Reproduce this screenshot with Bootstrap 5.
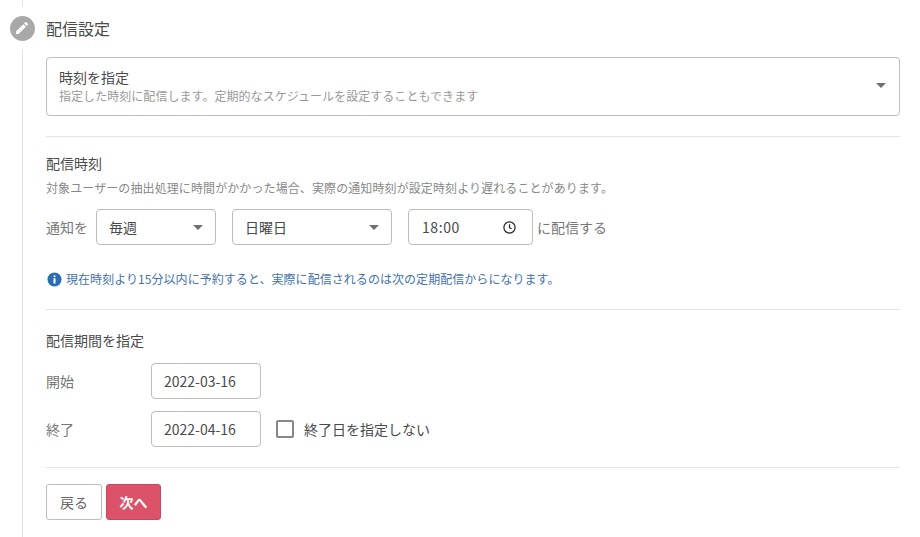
<!DOCTYPE html>
<html lang="ja">
<head>
<meta charset="utf-8">
<title>配信設定</title>
<link href="https://cdn.jsdelivr.net/npm/bootstrap@5.3.0/dist/css/bootstrap.min.css" rel="stylesheet">
<style>
body{font-family:"Noto Sans CJK JP","Noto Sans",sans-serif;font-size:14px;color:#4a4a4a;background:#fff;overflow:hidden}
.rail{margin-left:22px;border-left:1px solid #e2e2e2;padding:8px 20px 0 23px;position:relative;height:537px}
.step-dot{position:absolute;left:-14px;top:8px;width:26px;height:26px;box-sizing:content-box;border-top:8px solid #fff;border-bottom:8px solid #fff;margin-top:-1px;background:#fff;display:flex;align-items:center;justify-content:center}
.step-dot span{width:25px;height:25px;border-radius:50%;background:#a9a9a9;display:flex;align-items:center;justify-content:center}
.step-title{font-size:16px;line-height:24px;margin:8px 0 17px;font-weight:400;color:#4a4a4a}
.mode-box{height:59px;border:1px solid #bdbdbd;border-radius:4px;padding:7px 13px 9px 12px;line-height:20px;margin-bottom:20px}
.mode-sub{font-size:12px;color:#999;line-height:18px;letter-spacing:.05px}
.caret-a{width:0;height:0;border-left:5px solid transparent;border-right:5px solid transparent;border-top:5px solid #707070}
.rule-a{border-top:1px solid #e4e4e4;opacity:1;margin:0}
.sec-title{font-size:14px;line-height:20px;color:#4a4a4a}
.sec-one{margin-top:16px}
.sec-two{margin-top:20px}
.hint{font-size:12px;line-height:18px;color:#888;letter-spacing:.1px;margin-top:6px}
.ctl{height:36px;border:1px solid #bdbdbd;border-radius:4px;padding:0 12px;line-height:34px;font-size:14px;color:#4a4a4a;background:#fff}
.ctl-a{width:120px}
.ctl-b{width:160px}
.ctl-c{width:125px;padding-right:16px}
.ctl-c span{letter-spacing:.6px;margin-left:1px}
.ctl-d{width:110px}
.row-one{margin-top:12px}
.row-a{margin-top:13px}
.row-b{margin-top:12px}
.lbl{color:#777;font-size:14px;white-space:nowrap}
.lbl-w{width:105px}
.notice{font-size:12px;line-height:18px;color:#3f72ad;letter-spacing:.05px;margin-top:25px;padding-left:1px}
.rule-b{margin-top:21px}
.chk{width:18px;height:18px;border:2px solid #888;border-radius:2px;margin-left:15px;margin-right:10px}
.rule-c{margin-top:20px}
.btn-back,.btn-next{height:36px;font-size:14px;padding:0 12px;border-radius:3px;line-height:34px}
.btn-back{border:1px solid #bdbdbd;background:#fff;color:#666;width:56px}
.btn-next{border:1px solid #cf4660;background:#dc5268;color:#fff;font-weight:700;width:55px}
</style>
</head>
<body>
<div class="rail">
  <div class="step-dot"><span>
    <svg width="16" height="16" viewBox="0 0 24 24" fill="#fff"><path d="M3 17.25V21h3.75L17.81 9.94l-3.75-3.75L3 17.25zM20.71 7.04a1 1 0 0 0 0-1.41l-2.34-2.34a1 1 0 0 0-1.41 0l-1.83 1.83 3.75 3.75 1.83-1.83z"/></svg>
  </span></div>
  <h1 class="step-title">配信設定</h1>
  <div class="mode-box d-flex align-items-center justify-content-between">
    <div><div>時刻を指定</div><div class="mode-sub">指定した時刻に配信します。定期的なスケジュールを設定することもできます</div></div>
    <i class="caret-a"></i>
  </div>
  <hr class="rule-a">
  <div class="sec-title sec-one">配信時刻</div>
  <div class="hint">対象ユーザーの抽出処理に時間がかかった場合、実際の通知時刻が設定時刻より遅れることがあります。</div>
  <div class="d-flex align-items-center row-one">
    <span class="lbl me-2">通知を</span>
    <div class="ctl ctl-a d-flex align-items-center justify-content-between me-3"><span>毎週</span><i class="caret-a"></i></div>
    <div class="ctl ctl-b d-flex align-items-center justify-content-between me-3"><span>日曜日</span><i class="caret-a"></i></div>
    <div class="ctl ctl-c d-flex align-items-center justify-content-between"><span>18:00</span>
      <svg width="13" height="13" viewBox="0 0 13 13" fill="none" stroke="#222" stroke-width="1.2"><circle cx="6.5" cy="6.5" r="5.6"/><path d="M6.5 3.2v3.5l2.2 1.1"/></svg>
    </div>
    <span class="lbl ms-1">に配信する</span>
  </div>
  <div class="notice d-flex align-items-center gap-1">
    <svg width="15" height="15" viewBox="0 0 16 16"><circle cx="8" cy="8" r="7.5" fill="#2c6cb0"/><circle cx="8" cy="4.5" r="1.1" fill="#fff"/><rect x="6.9" y="6.7" width="2.2" height="5.6" fill="#fff"/></svg>
    <span>現在時刻より15分以内に予約すると、実際に配信されるのは次の定期配信からになります。</span>
  </div>
  <hr class="rule-a rule-b">
  <div class="sec-title sec-two">配信期間を指定</div>
  <div class="d-flex align-items-center row-a">
    <span class="lbl lbl-w">開始</span>
    <div class="ctl ctl-d">2022-03-16</div>
  </div>
  <div class="d-flex align-items-center row-b">
    <span class="lbl lbl-w">終了</span>
    <div class="ctl ctl-d">2022-04-16</div>
    <span class="chk"></span>
    <span>終了日を指定しない</span>
  </div>
  <hr class="rule-a rule-c">
  <div class="d-flex gap-1 mt-3">
    <button type="button" class="btn btn-back">戻る</button>
    <button type="button" class="btn btn-next">次へ</button>
  </div>
</div>
<script src="https://cdn.jsdelivr.net/npm/bootstrap@5.3.0/dist/js/bootstrap.bundle.min.js"></script>
</body>
</html>
